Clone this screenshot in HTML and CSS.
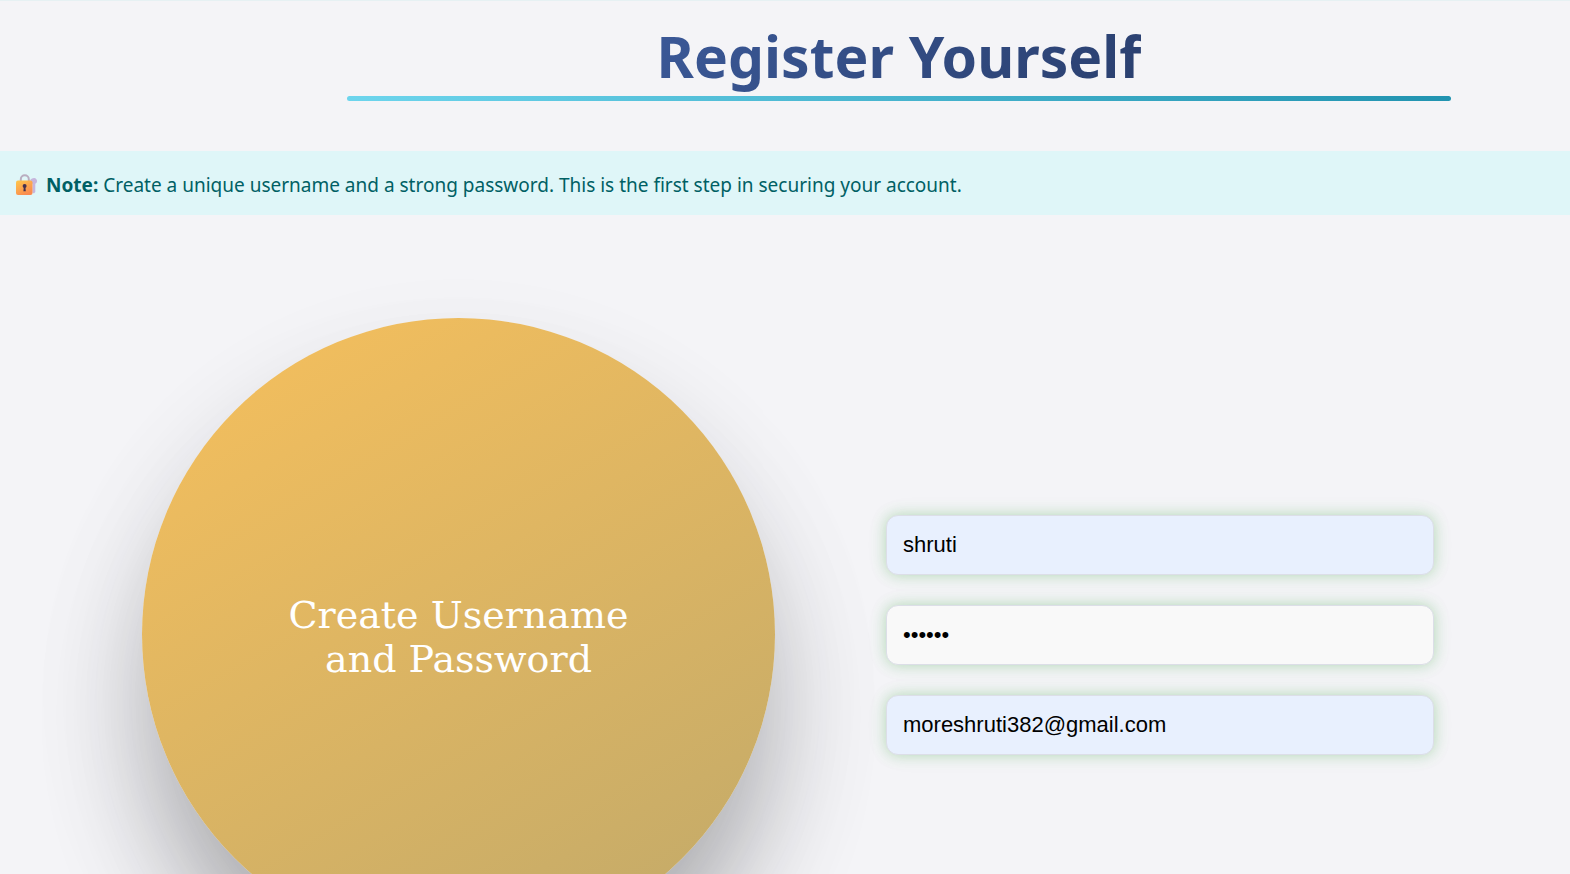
FILE: index.html
```
<!DOCTYPE html>
<html lang="en">
<head>
<meta charset="utf-8">
<meta name="viewport" content="width=device-width, initial-scale=1">
<title>Register Yourself</title>
<link rel="stylesheet" href="styles.css">
</head>
<body>
<header class="page-header">
  <h1 class="title"><span class="title-text">Register Yourself</span></h1>
</header>
<p class="note">
  <svg class="note-icon" viewBox="0 0 22 22" aria-hidden="true">
    <defs>
      <linearGradient id="lock-body" x1="0" y1="0" x2="0.6" y2="1">
        <stop offset="0" stop-color="#ffc84a"/>
        <stop offset="1" stop-color="#fa8a50"/>
      </linearGradient>
    </defs>
    <path d="M17 4.200a3.100 3.100 0 0 1 3.600 4.600c-.4.500-.8.700-1.300.9v8.200l-1.400 1.500-1.400-1V9.900c-1.800-.6-2.600-2.200-2.200-3.800.3-1 1.400-1.700 2.700-1.900z" fill="#c6b5dc"/>
    <path d="M4.800 8V5.200a4 4 0 0 1 8 0V8" fill="none" stroke="#b9adc0" stroke-width="2"/>
    <rect x="0" y="6.500" width="16.500" height="14.500" rx="2" fill="url(#lock-body)"/>
    <circle cx="8.600" cy="12" r="2" fill="#44304f"/>
    <path d="M7.800 13h1.600l.4 4.300H7.400z" fill="#44304f"/>
  </svg>
  <span><strong>Note:</strong> Create a unique username and a strong password. This is the first step in securing your account.</span>
</p>
<main class="register">
  <section class="circle">
    <h2 class="circle-text">Create Username<br>and Password</h2>
  </section>
  <form class="form">
    <input class="field filled" type="text" aria-label="Username" value="shruti">
    <input class="field" type="password" aria-label="Password" value="secret">
    <input class="field filled" type="email" aria-label="Email" value="moreshruti382@gmail.com">
  </form>
</main>
</body>
</html>
```
FILE: styles.css
```
* {
  box-sizing: border-box;
}

body {
  margin: 0;
  background: #f4f4f7;
  border-top: 1px solid #e6f1f3;
  font-family: "Segoe UI", "Noto Sans", sans-serif;
  overflow-x: hidden;
}

.page-header {
  padding: 15px 119px 0 347px;
}

.title {
  margin: 0;
  font-size: 57px;
  line-height: 80px;
  font-weight: 700;
  text-align: center;
}

.title::after {
  content: "";
  display: block;
  height: 5px;
  border-radius: 3px;
  background: linear-gradient(135deg, #6dd5ed, #2193b0);
}

.title-text {
  color: transparent;
  background: linear-gradient(135deg, #3b5998, #2a3f6e);
  -webkit-background-clip: text;
  background-clip: text;
}

.note {
  display: flex;
  align-items: center;
  gap: 8px;
  margin: 50px 0 0;
  padding: 18px 16px 14px;
  background: #dff6f8;
  color: #006064;
  font-size: 19px;
  line-height: 32px;
}

.note-icon {
  width: 22px;
  height: 22px;
  flex: none;
}

.register {
  display: flex;
  align-items: center;
  padding: 103px 136px 80px 142px;
  gap: 111px;
}

.circle {
  flex: none;
  width: 633px;
  aspect-ratio: 1;
  display: flex;
  align-items: center;
  justify-content: center;
  border-radius: 50%;
  background: linear-gradient(150deg, #f7c05c, #c0a96a);
  box-shadow: 0 80px 110px -10px rgba(0, 0, 0, 0.25), 0 60px 120px rgba(50, 50, 60, 0.1);
}

.circle-text {
  margin: 0;
  padding-top: 4px;
  color: #fff;
  font-family: "DejaVu Serif", serif;
  font-size: 38px;
  line-height: 44px;
  font-weight: 400;
  text-align: center;
}

.form {
  flex: 1;
  display: flex;
  flex-direction: column;
  gap: 30px;
}

.field {
  width: 100%;
  height: 60px;
  padding: 0 16px;
  border: 1px solid #dcdee7;
  border-radius: 12px;
  background: #f9f9f9;
  color: #000;
  font-family: "Liberation Sans", Arial, sans-serif;
  font-size: 22px;
  box-shadow: 0 0 14px rgba(76, 175, 80, 0.35), 0 0 24px rgba(76, 175, 80, 0.06);
}

.filled {
  background: #e8f0fe;
}
```
